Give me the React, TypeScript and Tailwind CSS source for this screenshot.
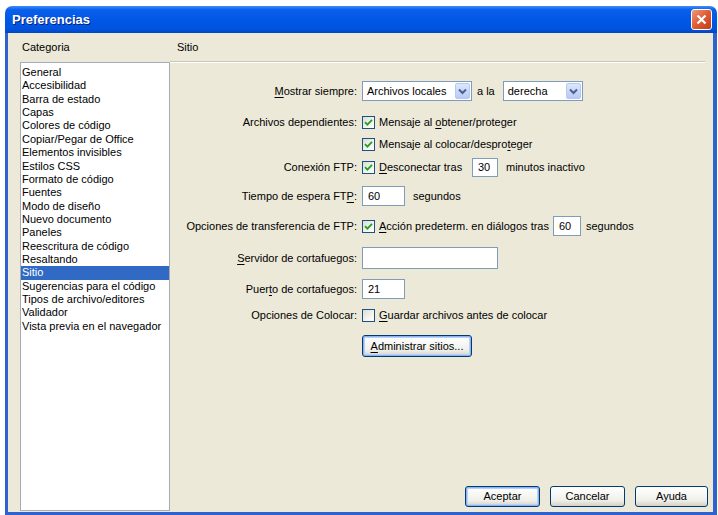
import React from 'react';

const categories = [
    'General',
    'Accesibilidad',
    'Barra de estado',
    'Capas',
    'Colores de código',
    'Copiar/Pegar de Office',
    'Elementos invisibles',
    'Estilos CSS',
    'Formato de código',
    'Fuentes',
    'Modo de diseño',
    'Nuevo documento',
    'Paneles',
    'Reescritura de código',
    'Resaltando',
    'Sitio',
    'Sugerencias para el código',
    'Tipos de archivo/editores',
    'Validador',
    'Vista previa en el navegador',
];

function U({ children }: { children: React.ReactNode }) {
    return <span className="underline underline-offset-2">{children}</span>;
}

function Checkbox({ checked }: { checked?: boolean }) {
    return (
        <div className="w-[13px] h-[13px] shrink-0 border border-[#1C5180] bg-[linear-gradient(135deg,#DCDCD7_0%,#F5F4EE_60%,#FFFFFF_100%)] flex items-center justify-center">
            {checked && (
                <svg width="9" height="9" viewBox="0 0 9 9">
                    <path d="M1 4.2 L3.4 6.6 L8 1.8" fill="none" stroke="#21A121" strokeWidth="1.8" />
                </svg>
            )}
        </div>
    );
}

function TextInput({ value, className }: { value?: string; className: string }) {
    return (
        <div className={`${className} border border-[#7F9DB9] bg-white flex items-center pl-[5px]`}>
            {value}
        </div>
    );
}

function Select({ value, className }: { value: string; className: string }) {
    return (
        <div className={`${className} h-[20px] border border-[#7F9DB9] bg-white flex items-center justify-between pl-[4px] pr-[1px]`}>
            <span>{value}</span>
            <div className="w-[15px] h-[16px] rounded-[2px] border border-[#B6C9F4] bg-[linear-gradient(to_bottom,#DCE6FD,#B7CBF8)] flex items-center justify-center">
                <svg width="9" height="7" viewBox="0 0 9 7">
                    <path d="M1 1.5 L4.5 5 L8 1.5" fill="none" stroke="#4D6185" strokeWidth="2" />
                </svg>
            </div>
        </div>
    );
}

function XpButton({ children, className, focused }: { children: React.ReactNode; className: string; focused?: boolean }) {
    return (
        <div
            className={`${className} rounded-[3px] border border-[#003C74] bg-[linear-gradient(to_bottom,#FFFFFF,#F0F0EA_70%,#D6D0C5)] flex items-center justify-center ${
                focused ? 'shadow-[inset_0_0_0_1px_#8CB4F2,inset_0_0_0_2px_#B9D1FA]' : ''
            }`}
        >
            {children}
        </div>
    );
}

function Row({ label, children, className }: { label: React.ReactNode; children?: React.ReactNode; className: string }) {
    return (
        <div className={`${className} flex items-center`}>
            <div className="w-[188px] text-right pr-[1px]">{label}</div>
            <div className="ml-[4px] flex items-center">{children}</div>
        </div>
    );
}

export default function App() {
    return (
        <div className="w-[718px] h-[515px] bg-white pt-[6px] pl-[5px] overflow-hidden font-['Liberation_Sans',Arial,sans-serif] text-[11px] text-black">
            <div className="w-[712px] h-[509px] flex flex-col">
                {/* Title bar */}
                <div className="h-[27px] shrink-0 rounded-t-[7px] bg-[linear-gradient(to_bottom,#3D8DF7_0%,#0A5FEA_14%,#0058E6_50%,#0053DF_85%,#0046C4_100%)] flex items-center justify-between pl-[7px] pr-[5px]">
                    <span className="text-white font-bold text-[13px] [text-shadow:1px_1px_0_#0A1F7A]">Preferencias</span>
                    <div className="w-[21px] h-[21px] rounded-[3px] border border-white bg-[linear-gradient(135deg,#EE9A7C_0%,#E0603A_45%,#C13A17_100%)] flex items-center justify-center">
                        <svg width="11" height="11" viewBox="0 0 11 11">
                            <path d="M1.5 1.5 L9.5 9.5 M9.5 1.5 L1.5 9.5" stroke="white" strokeWidth="2.2" />
                        </svg>
                    </div>
                </div>

                {/* Body */}
                <div className="flex-1 flex bg-[#ECE9D8] border-l-[3px] border-r-[4px] border-b-[3px] border-[#2E62CF]">
                    {/* Category list */}
                    <div className="w-[162px] shrink-0 flex flex-col pl-[12px]">
                        <div className="h-[29px] flex items-center pl-[2px]">Categoria</div>
                        <div className="h-[449px] border border-[#A5ACB5] bg-white pt-[3px]">
                            {categories.map((c) => (
                                <div
                                    key={c}
                                    className={`h-[13.37px] leading-[13.37px] pl-[1px] whitespace-nowrap ${
                                        c === 'Sitio' ? 'bg-[#316AC5] text-white' : ''
                                    }`}
                                >
                                    {c}
                                </div>
                            ))}
                        </div>
                    </div>

                    {/* Settings panel */}
                    <div className="flex-1 flex flex-col">
                        <div className="h-[29px] flex items-center pl-[7px] mr-[8px] border-b border-[#C9C6B6]">Sitio</div>
                        <div className="h-px mr-[8px] bg-white" />

                        <Row className="mt-[18px] h-[20px]" label={<><U>M</U>ostrar siempre:</>}>
                            <Select className="w-[110px]" value="Archivos locales" />
                            <span className="ml-[5px] mr-[8px]">a la</span>
                            <Select className="w-[80px]" value="derecha" />
                        </Row>

                        <Row className="mt-[13px] h-[16px]" label="Archivos dependientes:">
                            <Checkbox checked />
                            <span className="ml-[4px]">Mensaje al <U>o</U>btener/proteger</span>
                        </Row>

                        <Row className="mt-[6px] h-[16px]" label="">
                            <Checkbox checked />
                            <span className="ml-[4px]">Mensaje al colocar/despro<U>t</U>eger</span>
                        </Row>

                        <Row className="mt-[5px] h-[20px]" label="Conexión FTP:">
                            <Checkbox checked />
                            <span className="ml-[4px] w-[93px]"><U>D</U>esconectar tras</span>
                            <TextInput className="w-[26px] h-[19px]" value="30" />
                            <span className="ml-[8px]">minutos inactivo</span>
                        </Row>

                        <Row className="mt-[9px] h-[20px]" label={<>Tiempo de espera FT<U>P</U>:</>}>
                            <TextInput className="w-[43px] h-[20px]" value="60" />
                            <span className="ml-[8px]">segundos</span>
                        </Row>

                        <Row className="mt-[10px] h-[20px]" label="Opciones de transferencia de FTP:">
                            <Checkbox checked />
                            <span className="ml-[4px] mr-[4px]"><U>A</U>cción predeterm. en diálogos tras</span>
                            <TextInput className="w-[28px] h-[20px]" value="60" />
                            <span className="ml-[5px]">segundos</span>
                        </Row>

                        <Row className="mt-[11px] h-[22px]" label={<><U>S</U>ervidor de cortafuegos:</>}>
                            <TextInput className="w-[136px] h-[22px]" />
                        </Row>

                        <Row className="mt-[10px] h-[20px]" label={<>Puer<U>t</U>o de cortafuegos:</>}>
                            <TextInput className="w-[43px] h-[20px]" value="21" />
                        </Row>

                        <Row className="mt-[8px] h-[16px]" label="Opciones de Colocar:">
                            <Checkbox />
                            <span className="ml-[4px]"><U>G</U>uardar archivos antes de colocar</span>
                        </Row>

                        <Row className="mt-[12px] h-[22px]" label="">
                            <XpButton className="w-[110px] h-[22px]" focused>
                                <span><U>A</U>dministrar sitios...</span>
                            </XpButton>
                        </Row>

                        <div className="flex-1" />

                        <div className="flex justify-end gap-[10px] pr-[5px] pb-[5px]">
                            <XpButton className="w-[75px] h-[21px]" focused>Aceptar</XpButton>
                            <XpButton className="w-[75px] h-[21px]">Cancelar</XpButton>
                            <XpButton className="w-[73px] h-[21px]">Ayuda</XpButton>
                        </div>
                    </div>
                </div>
            </div>
        </div>
    );
}
